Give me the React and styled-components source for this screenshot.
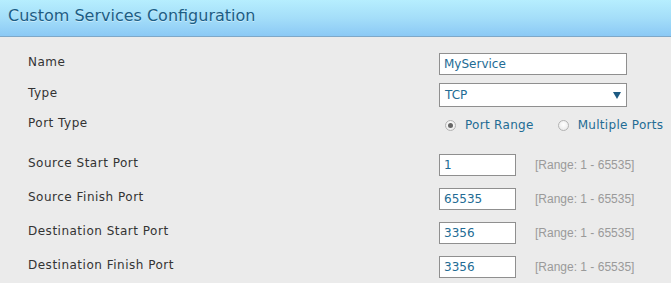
import React from "react";
import styled, { createGlobalStyle } from "styled-components";

const Global = createGlobalStyle`
  html, body { margin: 0; padding: 0; background: #ebebeb; }
  body { font-family: "DejaVu Sans", Verdana, sans-serif; }
`;

const Page = styled.div`
  width: 671px;
  height: 283px;
  overflow: hidden;
  background: #ebebeb;
`;

const Header = styled.div`
  height: 37px;
  box-sizing: border-box;
  padding: 6px 0 0 8px;
  background: linear-gradient(to bottom, #b6eefe 0%, #a4def9 50%, #8bc9f5 100%);
  border-bottom: 1px solid #7ea8c8;
`;

const Title = styled.div`
  font-family: "DejaVu Sans", Verdana, sans-serif;
  font-size: 16px;
  line-height: 19px;
  color: #1c5d84;
  text-shadow: 0 1px 0 rgba(255, 255, 255, 0.45);
`;

const Body = styled.div`
  padding: 12px 0 0 28px;
  display: flex;
  flex-direction: column;
`;

const Row = styled.div`
  display: grid;
  grid-template-columns: 411px 1fr;
  align-items: center;
  height: ${(p) => p.h}px;
  margin-top: ${(p) => p.mt || 0}px;
`;

const Label = styled.div`
  font-size: 12px;
  letter-spacing: 0.5px;
  color: #333;
  padding-bottom: 4px;
`;

const Controls = styled.div`
  display: flex;
  align-items: center;
`;

const TextInput = styled.div`
  box-sizing: border-box;
  width: ${(p) => p.w}px;
  height: ${(p) => p.hh || 21}px;
  border: 1px solid #8f8f8f;
  background: #fff;
  padding-left: 4px;
  display: flex;
  align-items: center;
  font-size: 12px;
  color: #236b94;
`;

const Select = styled(TextInput)`
  justify-content: space-between;
  padding-left: 5px;
  padding-right: 5px;
`;

const Arrow = styled.span`
  width: 0;
  height: 0;
  border-left: 4px solid transparent;
  border-right: 4px solid transparent;
  border-top: 7px solid #1d5a82;
  margin-top: 1px;
`;

const RadioGroup = styled.div`
  display: flex;
  align-items: center;
  margin-left: 6px;
`;

const RadioItem = styled.div`
  display: flex;
  align-items: center;
  margin-right: ${(p) => p.mr || 0}px;
`;

const RadioCircle = styled.span`
  box-sizing: border-box;
  width: 11px;
  height: 11px;
  border-radius: 50%;
  border: 1px solid #b3b3b3;
  background: radial-gradient(circle at 50% 40%, #fff 0%, #e6e6e6 100%);
  display: flex;
  align-items: center;
  justify-content: center;
  margin-right: 9px;
  &::after {
    content: "";
    width: 5px;
    height: 5px;
    border-radius: 50%;
    background: ${(p) => (p.checked ? "#666" : "transparent")};
  }
`;

const RadioLabel = styled.span`
  font-size: 12px;
  letter-spacing: 0.3px;
  color: #236b94;
`;

const Hint = styled.span`
  font-family: "Liberation Sans", Arial, sans-serif;
  font-size: 12px;
  color: #9a9a9a;
  margin-left: 19px;
`;

const portRows = [
  { label: "Source Start Port", value: "1" },
  { label: "Source Finish Port", value: "65535" },
  { label: "Destination Start Port", value: "3356" },
  { label: "Destination Finish Port", value: "3356" },
];

export default function App() {
  return (
    <Page>
      <Global />
      <Header>
        <Title>Custom Services Configuration</Title>
      </Header>
      <Body>
        <Row h={30}>
          <Label>Name</Label>
          <Controls>
            <TextInput w={188} hh={22}>MyService</TextInput>
          </Controls>
        </Row>
        <Row h={31}>
          <Label>Type</Label>
          <Controls>
            <Select w={188} hh={24}>
              <span>TCP</span>
              <Arrow />
            </Select>
          </Controls>
        </Row>
        <Row h={30}>
          <Label>Port Type</Label>
          <Controls>
            <RadioGroup>
              <RadioItem mr={24}>
                <RadioCircle checked />
                <RadioLabel>Port Range</RadioLabel>
              </RadioItem>
              <RadioItem>
                <RadioCircle />
                <RadioLabel>Multiple Ports</RadioLabel>
              </RadioItem>
            </RadioGroup>
          </Controls>
        </Row>
        {portRows.map((r, i) => (
          <Row key={r.label} h={34} mt={i === 0 ? 8 : 0}>
            <Label>{r.label}</Label>
            <Controls>
              <TextInput w={77} hh={22}>{r.value}</TextInput>
              <Hint>[Range: 1 - 65535]</Hint>
            </Controls>
          </Row>
        ))}
      </Body>
    </Page>
  );
}
